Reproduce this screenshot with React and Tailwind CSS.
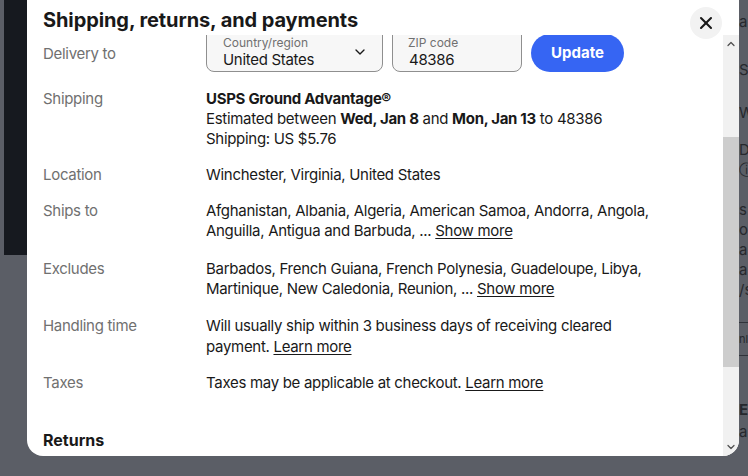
import { ChevronDown, ChevronUp, X } from "lucide-react"

const font = { fontFamily: "Inter, 'Liberation Sans', sans-serif" }

const Row = ({ label, children, className = "", labelClass = "" }) => (
  <div className={`flex ${className}`}>
    <div className={`w-[163px] shrink-0 text-[#707070] ${labelClass}`}>{label}</div>
    <div className="flex-1 text-[#191919] pr-[60px]">{children}</div>
  </div>
)

const Link = ({ children }) => <span className="underline underline-offset-2">{children}</span>

export default function App() {
  return (
    <div className="relative w-[748px] h-[476px] overflow-hidden bg-[#5b5e66]" style={font}>
      {/* page behind the overlay */}
      <div className="absolute left-[4px] top-0 w-[23px] h-[255px] bg-[#16191f]" />
      <div className="absolute left-[739px] top-0 w-[40px] h-[476px] text-[15px] leading-[20px] text-[#26282d]">
        <div className="mt-[12px]">an</div>
        <div className="mt-[28px]">Sh</div>
        <div className="mt-[23px]">Wi</div>
        <div className="mt-[17px]">De</div>
        <div className="mt-[0px]">ⓘ</div>
        <div className="mt-[20px]">s r</div>
        <div>oc</div>
        <div>as</div>
        <div>an</div>
        <div>/s</div>
        <div className="mt-[22px] border-t border-[#30333a] pt-[6px] text-[11px]">nl</div>
        <div className="mt-[6px] border-t border-[#30333a]" />
        <div className="mt-[44px] font-bold">EE</div>
        <div className="mt-[2px]">an</div>
      </div>

      {/* modal */}
      <div className="absolute left-[27px] top-[-16px] w-[712px] h-[472px] bg-white rounded-2xl overflow-hidden flex flex-col">
        <div className="h-[51px] shrink-0 flex items-end justify-between pl-[16px] pr-[17px]">
          <h2 className="text-[20px] font-bold text-[#191919] leading-[26px] mb-[2px] tracking-[-0.1px]">
            Shipping, returns, and payments
          </h2>
          <button className="w-[32px] h-[32px] rounded-full bg-[#f2f2f2] flex items-center justify-center mb-[-4px]">
            <X size={20} strokeWidth={2.5} className="text-[#191919]" />
          </button>
        </div>

        <div className="flex-1 flex min-h-0">
          <div className="flex-1 overflow-hidden pl-[16px] text-[15px] leading-[20px] tracking-[-0.3px]">
            <div className="-mt-[9px]">
              <Row label="Delivery to" className="items-center" labelClass="mt-[9px]">
                <div className="flex items-center gap-[9px]">
                  <div className="w-[177px] h-[46px] rounded-lg border border-[#8f8f8f] bg-[#f7f7f7] pl-[16px] pr-[14px] flex items-end pb-[1px] justify-between">
                    <div>
                      <div className="text-[12px] leading-[14px] text-[#707070] tracking-normal">Country/region</div>
                      <div className="leading-[20px]">United States</div>
                    </div>
                    <ChevronDown size={16} strokeWidth={2} className="mb-[10px] text-[#191919]" />
                  </div>
                  <div className="w-[130px] h-[46px] rounded-lg border border-[#8f8f8f] bg-[#f7f7f7] pl-[15px] flex items-end pb-[1px]">
                    <div>
                      <div className="text-[12px] leading-[14px] text-[#707070] tracking-normal">ZIP code</div>
                      <div className="leading-[20px] pl-[1px]">48386</div>
                    </div>
                  </div>
                  <button className="w-[93px] h-[38px] mt-[8px] rounded-full bg-[#3665f3] text-white font-bold tracking-normal">Update</button>
                </div>
              </Row>

              <Row label="Shipping" className="mt-[17px]">
                <div className="font-bold">USPS Ground Advantage®</div>
                <div>
                  Estimated between <b>Wed, Jan 8</b> and <b>Mon, Jan 13</b> to 48386
                </div>
                <div>Shipping: US $5.76</div>
              </Row>

              <Row label="Location" className="mt-[16px]">
                Winchester, Virginia, United States
              </Row>

              <Row label="Ships to" className="mt-[16px]">
                Afghanistan, Albania, Algeria, American Samoa, Andorra, Angola, Anguilla, Antigua and Barbuda, ... <Link>Show more</Link>
              </Row>

              <Row label="Excludes" className="mt-[18px]">
                Barbados, French Guiana, French Polynesia, Guadeloupe, Libya, Martinique, New Caledonia, Reunion, ... <Link>Show more</Link>
              </Row>

              <Row label="Handling time" className="mt-[16px] leading-[21px]">
                Will usually ship within 3 business days of receiving cleared payment. <Link>Learn more</Link>
              </Row>

              <Row label="Taxes" className="mt-[16px]">
                Taxes may be applicable at checkout. <Link>Learn more</Link>
              </Row>

              <h3 className="mt-[37px] text-[16px] font-bold text-[#191919] tracking-normal">Returns</h3>
            </div>
          </div>

          {/* scrollbar */}
          <div className="w-[16px] shrink-0 bg-[#f1f1f1] flex flex-col items-center">
            <ChevronUp size={12} strokeWidth={2.5} className="mt-[3px] text-[#505050]" />
            <div className="mt-[87px] w-full h-[230px] bg-[#cdcdcd]" />
            <div className="flex-1" />
            <ChevronDown size={12} strokeWidth={2.5} className="mb-[3px] text-[#505050]" />
          </div>
        </div>
      </div>
    </div>
  )
}
